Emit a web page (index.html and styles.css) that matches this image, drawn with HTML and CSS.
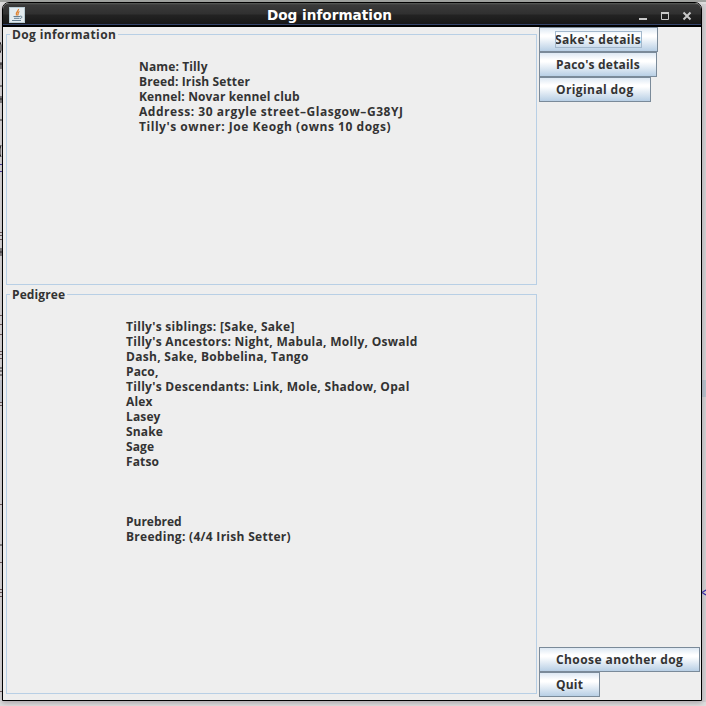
FILE: index.html
```html
<!DOCTYPE html>
<html lang="en">
<head>
<meta charset="utf-8">
<title>Dog information</title>
<link rel="stylesheet" href="styles.css">
</head>
<body>
<svg class="backdrop" width="706" height="706" viewBox="0 0 706 706" aria-hidden="true">
  <rect width="706" height="706" fill="#dedede"/>
  <rect width="706" height="2" fill="#a0a3a0"/>
  <rect x="702" y="4" width="4" height="698" fill="#d2d0d2"/>
  <rect x="702" y="380" width="4" height="17" fill="#b4bfca"/>
  <rect y="380" width="2" height="22" fill="#c3ccd5"/>
  <path d="M0 42l1 3v5l-1 3M0 64h2M1 62v7M0 86h2M0 120h2M0 99h2M1 96v7M1 145l-1 4v5l1 3M0 252h2M1 248v8M0 368h2M0 371h2M0 375h2M0 545h2" stroke="#111" fill="none"/>
  <path d="M0 164.500h2M0 171.500h2" stroke="#2c2290"/>
  <path d="M0 232.500h2M0 235.500h2M0 239.500h2M0 315.500h2M0 324.500h2M0 334.500h2M0 351.500h2M0 354.500h2M0 358.500h2M0 402.500h2M0 405.500h2M0 504.500h2M0 562.500h2M0 589.500h2M0 592.500h2M0 596.500h2M0 691.500h2" stroke="#5d4a4a"/>
  <path d="M706 590l-4 2.500 4 2.500" stroke="#3524a8" stroke-width="1.300" fill="none"/>
</svg>
<main class="window">
  <header class="titlebar">
    <svg class="java" width="16" height="16" viewBox="0 0 16 16">
      <rect width="16" height="16" fill="#e3ebef"/>
      <rect x=".5" y=".5" width="15" height="15" fill="none" stroke="#b9cbd3"/>
      <path d="M9.500 2C10 4.300 6 4.500 7.500 8.500M10.500 4.500C8 5.500 10 6.500 8.500 8.500" fill="none" stroke="#e08434" stroke-width="1.300"/>
      <path d="M4.500 9.500h6.500M5 11.300h5.500M3 13.500h9M11 9.200c3-.5 2 2.300 0 2.400" fill="none" stroke="#667f91"/>
    </svg>
    <h1 class="title">Dog information</h1>
    <svg class="controls" width="54" height="11" viewBox="0 0 54 11">
      <path d="M0 8h8" stroke="#c8c8c8" stroke-width="2"/>
      <path d="M22.500 2h7v6.500h-7z" fill="none" stroke="#c8c8c8"/>
      <path d="M22 2h8" stroke="#c8c8c8" stroke-width="2"/>
      <path d="M44.500 1.500l7 7M51.500 1.500l-7 7" stroke="#c8c8c8" stroke-width="2"/>
    </svg>
  </header>
  <div class="content">
    <div class="panels">
      <section class="group info">
        <h2 class="legend">Dog information</h2>
        <div class="lines">
          <p>Name: Tilly</p>
          <p>Breed: Irish Setter</p>
          <p>Kennel: Novar kennel club</p>
          <p class="wide">Address: 30 argyle street–Glasgow–G38YJ</p>
          <p class="wide">Tilly's owner: Joe Keogh (owns 10 dogs)</p>
        </div>
      </section>
      <section class="group pedigree">
        <h2 class="legend">Pedigree</h2>
        <div class="lines">
          <p class="list">Tilly's siblings: [Sake, Sake]</p>
          <p class="list">Tilly's Ancestors: Night, Mabula, Molly, Oswald</p>
          <p class="list">Dash, Sake, Bobbelina, Tango</p>
          <p>Paco,</p>
          <p class="list">Tilly's Descendants: Link, Mole, Shadow, Opal</p>
          <p>Alex</p>
          <p>Lasey</p>
          <p>Snake</p>
          <p>Sage</p>
          <p>Fatso</p>
          <p class="purebred">Purebred</p>
          <p class="list">Breeding: (4/4 Irish Setter)</p>
        </div>
      </section>
    </div>
    <nav class="actions">
      <button class="btn sake"><span class="focus">Sake's details</span></button>
      <button class="btn paco">Paco's details</button>
      <button class="btn original">Original dog</button>
      <button class="btn choose">Choose another dog</button>
      <button class="btn quit">Quit</button>
    </nav>
  </div>
</main>
</body>
</html>
```
FILE: styles.css
```css
* { box-sizing: border-box; }
body { margin: 0; width: 706px; height: 706px; overflow: hidden; padding: 2px; background: #dedede; font: 700 12px/15px "Open Sans", "Noto Sans", sans-serif; letter-spacing: .13px; color: #333; }
.backdrop { position: absolute; left: 0; top: 0; z-index: -1; }
.window { width: 700px; height: 699px; border: 1px solid #000; border-radius: 7px 7px 0 0; background: #eee; box-shadow: 0 2px 5px #887c8499; overflow: hidden; }
.titlebar { display: flex; align-items: center; height: 24px; padding: 0 8px 0 6px; background: linear-gradient(#5b5e5b 0, #3a3a3a 2px, #303030 11px, #232323 12px, #171717 21px, #34446b 21px, #34446b 22px, #000 22px); }
.title { margin: 0 0 0 242px; font: bold 13.600px/22px "DejaVu Sans", sans-serif; letter-spacing: 0; color: #fff; }
.controls { margin: 2px 0 0 auto; }
.content { display: flex; height: 673px; }
.panels { width: 536px; padding: 7px 0 0 3px; }
.group { position: relative; width: 531px; border: 1px solid #b8cfe5; }
.info { height: 251px; margin-bottom: 9px; }
.pedigree { height: 400px; }
.legend { position: absolute; left: 3px; top: -8px; margin: 0; padding: 0 2px; background: #eee; font-size: 12px; line-height: 15px; font-weight: 700; letter-spacing: .38px; }
.pedigree .legend { letter-spacing: .1px; }
.lines { padding: 24px 0 0 132px; }
.pedigree .lines { padding-left: 119px; }
p { margin: 0; height: 15px; white-space: nowrap; }
.wide { letter-spacing: .54px; }
.list { letter-spacing: .29px; }
.purebred { margin-top: 45px; letter-spacing: 0; }
.actions { display: flex; flex-direction: column; align-items: flex-start; width: 162px; padding-bottom: 3px; }
.btn { height: 25px; padding: 0 0 0 16px; border: 1px solid #7a8a99; background: linear-gradient(#dde8f3 0, #fff 30%, #fff 38%, #b8cfe5 100%); font: inherit; letter-spacing: .2px; color: #333; text-align: left; white-space: nowrap; }
.focus { display: block; width: 87px; height: 17px; margin-left: -1px; outline: 1px solid #a3b8cc; outline-offset: -1px; line-height: 17px; letter-spacing: .36px; }
.sake { width: 119px; }
.paco { width: 118px; }
.original { width: 112px; letter-spacing: .4px; }
.choose { width: 161px; margin-top: auto; letter-spacing: .42px; }
.quit { width: 61px; }
```
